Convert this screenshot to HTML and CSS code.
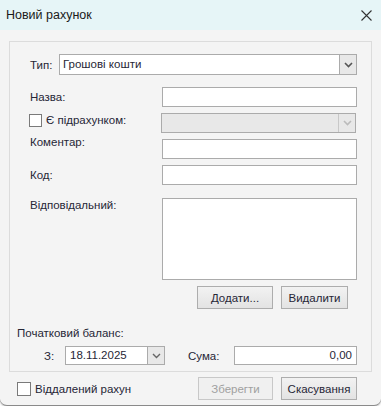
FILE: index.html
```html
<!DOCTYPE html>
<html lang="uk">
<head>
    <meta charset="UTF-8">
    <title>Новий рахунок</title>
    <link rel="stylesheet" href="styles.css">
</head>
<body>
    <div class="window">
        <div class="titlebar">
            <span class="title">Новий рахунок</span>
            <svg class="close" width="11" height="11" viewBox="0 0 11 11">
                <path d="M0.5 0.5 L10.5 10.5 M10.5 0.5 L0.5 10.5" stroke="#333" stroke-width="1.1" fill="none"/>
            </svg>
        </div>

        <div class="panel">
            <div class="row row-type">
                <span class="label label-type">Тип:</span>
                <div class="combo combo-type">
                    <span class="combo-text">Грошові кошти</span>
                    <span class="combo-btn"><svg width="9" height="6" viewBox="0 0 9 6"><path d="M1 1 L4.5 4.5 L8 1" stroke="#555" stroke-width="1.6" fill="none"/></svg></span>
                </div>
            </div>

            <div class="row row-name">
                <span class="label">Назва:</span>
                <div class="field input"></div>
            </div>

            <div class="row">
                <label class="label check-label"><span class="checkbox"></span>Є підрахунком:</label>
                <div class="field combo disabled">
                    <span class="combo-text"></span>
                    <span class="combo-btn"><svg width="9" height="6" viewBox="0 0 9 6"><path d="M1 1 L4.5 4.5 L8 1" stroke="#bbb" stroke-width="1.6" fill="none"/></svg></span>
                </div>
            </div>

            <div class="row row-top">
                <span class="label">Коментар:</span>
                <div class="field input"></div>
            </div>

            <div class="row">
                <span class="label">Код:</span>
                <div class="field input"></div>
            </div>

            <div class="row row-list">
                <span class="label">Відповідальний:</span>
                <div class="field listbox"></div>
            </div>

            <div class="row-buttons">
                <button class="btn btn-add">Додати...</button>
                <button class="btn btn-del">Видалити</button>
            </div>

            <div class="balance-title">Початковий баланс:</div>

            <div class="balance-row">
                <span class="label-from">З:</span>
                <div class="combo combo-date">
                    <span class="combo-text">18.11.2025</span>
                    <span class="combo-btn"><svg width="9" height="6" viewBox="0 0 9 6"><path d="M1 1 L4.5 4.5 L8 1" stroke="#666" stroke-width="1.4" fill="none"/></svg></span>
                </div>
                <span class="label-sum">Сума:</span>
                <div class="input input-sum">0,00</div>
            </div>
        </div>

        <div class="footer">
            <label class="footer-check"><span class="checkbox"></span><span class="footer-check-text">Віддалений рахун</span></label>
            <button class="btn btn-save" disabled>Зберегти</button>
            <button class="btn btn-cancel">Скасування</button>
        </div>
    </div>
</body>
</html>
```

FILE: styles.css
```css
body {
    margin: 0;
    background: #fff;
    font-family: "Liberation Sans", "Noto Sans", Arial, sans-serif;
    font-size: 11.5px;
    color: #262636;
}

.window {
    width: 381px;
    height: 405px;
    background: #f4f4f4;
    border-bottom: 1px solid #8a8a8a;
    border-radius: 0 0 7px 7px;
    box-shadow: 0 1px 2px rgba(0, 0, 0, 0.25);
    overflow: hidden;
}

.titlebar {
    height: 30px;
    background: #e6f5f7;
    display: flex;
    align-items: center;
    justify-content: space-between;
    padding: 0 9px 0 6px;
}

.title {
    font-size: 12.5px;
    color: #1a1a1a;
}

.close {
    margin-top: 1px;
}

/* Рамка групи */
.panel {
    margin: 11px 0 0 9px;
    width: 327px;
    height: 317px;
    padding: 12px 14px 0 20px;
    border: 1px solid #dcdcdc;
}

.row {
    display: flex;
    align-items: center;
    height: 20px;
    margin-top: 6px;
}

.row-type {
    height: 21px;
    margin-top: 0;
}

.row-name {
    margin-top: 12px;
}

.row-top {
    align-items: flex-start;
}

.row-top .label {
    margin-top: -3px;
}

.row-list {
    align-items: flex-start;
    height: 82px;
    margin-top: 13px;
}

.row-list .label {
    margin-top: 1px;
}

.label {
    width: 132px;
    flex: none;
}

.label-type {
    width: 29px;
}

.check-label {
    display: flex;
    align-items: center;
    margin-top: -6px;
    margin-left: -1px;
}

.checkbox {
    width: 11px;
    height: 11px;
    border: 1px solid #7a7a7a;
    background: #fff;
    margin-right: 4px;
    flex: none;
}

.field {
    width: 193px;
    height: 18px;
    border: 1px solid #ababab;
    background: #fff;
}

.listbox {
    height: 80px;
}

.combo {
    display: flex;
    border: 1px solid #ababab;
    background: #fff;
}

.combo-type {
    width: 296px;
    height: 19px;
}

.combo-text {
    flex: 1;
    padding-left: 3px;
    line-height: 19px;
}

.combo-btn {
    width: 16px;
    border-left: 1px solid #ababab;
    background: #e8e8e8;
    display: flex;
    align-items: center;
    justify-content: center;
}

.disabled {
    background: #e8e8e8;
}

.disabled .combo-btn {
    border-left-color: #c8c8c8;
}

.row-buttons {
    display: flex;
    gap: 8px;
    margin: 6px 0 0 167px;
}

.btn {
    height: 23px;
    border: 1px solid #adadad;
    background: linear-gradient(#f2f2f2, #e3e3e3);
    font-family: inherit;
    font-size: 11.5px;
    color: #262636;
    padding: 0;
}

.btn-add {
    width: 76px;
}

.btn-del {
    width: 67px;
}

.balance-title {
    margin: 17px 0 0 -13px;
    height: 15px;
    line-height: 15px;
}

.balance-row {
    display: flex;
    align-items: center;
    margin-top: 5px;
    height: 19px;
}

.label-from {
    margin-left: 14px;
    width: 21px;
}

.combo-date {
    width: 98px;
    height: 17px;
}

.combo-date .combo-text {
    line-height: 17px;
    padding-left: 4px;
}

.label-sum {
    margin-left: 23px;
    width: 46px;
}

.input {
    border: 1px solid #ababab;
    background: #fff;
}

.input-sum {
    width: 117px;
    height: 17px;
    line-height: 17px;
    padding-right: 4px;
    text-align: right;
}

.footer {
    display: flex;
    align-items: center;
    margin-top: 5px;
    padding-left: 17px;
}

.footer-check {
    display: flex;
    align-items: center;
    width: 114px;
    white-space: nowrap;
    margin-right: 67px;
}

.footer-check .checkbox {
    width: 12px;
    height: 12px;
}

.btn-save {
    width: 75px;
    color: #a0a0a0;
    background: #f0f0f0;
    border-color: #c8c8c8;
}

.btn-cancel {
    width: 76px;
    margin-left: 8px;
}
```
